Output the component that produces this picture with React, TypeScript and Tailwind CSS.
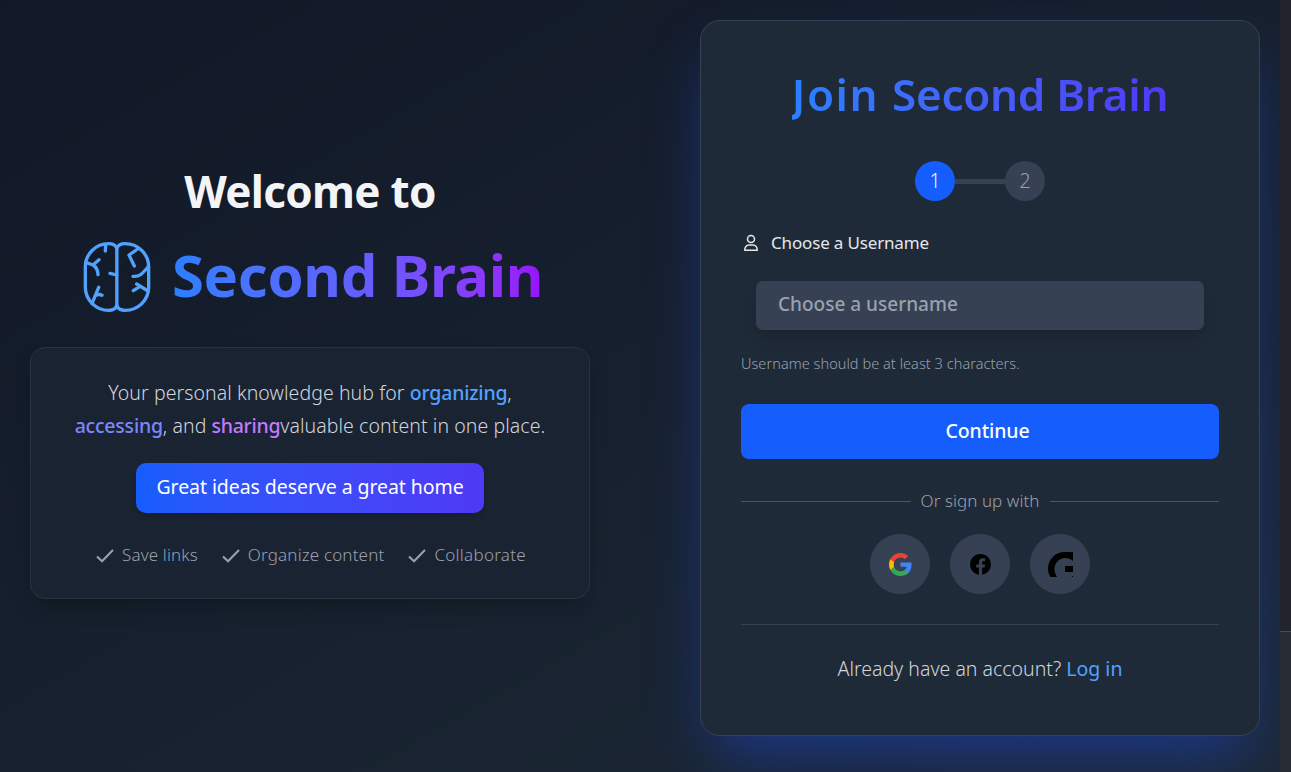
import React from "react";

function BrainIcon() {
  return (
    <svg className="h-[72px] w-[68px] shrink-0" viewBox="24 18 204 216" fill="none" stroke="#51a2ff" strokeWidth="10" strokeLinecap="round" strokeLinejoin="round">
      <path d="M125.500 40C122 30 112 26 101 26C62 26 31 58 31 95V157C31 195 63 226 101 226C112 226 122 222 125.500 212" />
      <path d="M125.500 40C129 30 139 26 150 26C190 26 221 58 221 95V157C221 195 190 226 150 226C139 226 129 222 125.500 212V40" />
      <path d="M92 28 91 48M32 82 54 90C66 98 69 107 69 119M54 90 72 74M105 115 125 120M51 206 71 157M61 181C69 178 77 178 81 181M188 42 162 60 178 93M220 95C204 113 196 126 174 124M219 168 185 147M175 167 194 155" />
    </svg>
  );
}

function UserIcon() {
  return (
    <svg className="h-[18px] w-5" viewBox="0 0 20 18" fill="none" stroke="currentColor" strokeWidth="1.5" strokeLinejoin="round">
      <circle cx="10" cy="5" r="3.500" />
      <path d="M3.700 16.300C3.700 13.300 5.500 11 8 11H12C14.500 11 16.300 13.300 16.300 16.300Z" />
    </svg>
  );
}

function GoogleIcon() {
  return (
    <svg className="size-[25px]" viewBox="0 0 24 24">
      <path fill="#4285F4" d="M22.560 12.250c0-.780-.070-1.530-.200-2.250H12v4.260h5.920c-.260 1.370-1.040 2.530-2.210 3.310v2.770h3.570c2.080-1.920 3.280-4.740 3.280-8.090z" />
      <path fill="#34A853" d="M12 23c2.970 0 5.460-.980 7.280-2.660l-3.570-2.770c-.980.660-2.230 1.060-3.710 1.060-2.860 0-5.290-1.930-6.160-4.530H2.180v2.840C3.990 20.530 7.700 23 12 23z" />
      <path fill="#FBBC05" d="M5.840 14.090c-.220-.660-.350-1.360-.350-2.090s.130-1.430.350-2.090V7.070H2.180C1.430 8.550 1 10.220 1 12s.430 3.450 1.180 4.930l3.660-2.840z" />
      <path fill="#EA4335" d="M12 5.380c1.620 0 3.060.560 4.210 1.640l3.150-3.150C17.450 2.090 14.970 1 12 1 7.700 1 3.990 3.470 2.180 7.070l3.660 2.840c.870-2.600 3.300-4.530 6.160-4.530z" />
    </svg>
  );
}

function Feature({ label, className }: { label: string; className: string }) {
  return (
    <div className="flex items-center">
      <svg className="mr-[6px] h-5 w-[22px]" viewBox="0 0 22 20" fill="none" stroke="currentColor" strokeWidth="2.1">
        <path d="M3 11.500 8 16.300 19 5" />
      </svg>
      <span className={className}>{label}</span>
    </div>
  );
}

export default function App() {
  return (
    <div className="flex h-[772px] w-[1291px] overflow-hidden bg-[#21252b] font-['Noto_Sans','Open_Sans',sans-serif] whitespace-nowrap">
      <main className="flex h-full w-[1280px] overflow-hidden bg-[linear-gradient(150deg,#111827,#1d2936)]">
        <section className="flex w-[620px] shrink-0 flex-col items-center pt-[161px]">
          <h1 className="h-[61px] text-[44px] leading-[60px] font-bold tracking-[-0.7px] text-gray-100">Welcome to</h1>
          <div className="mt-[19px] flex h-[72px] items-center pl-[6px]">
            <BrainIcon />
            <span className="-mt-[6px] ml-[21px] bg-linear-to-r from-[#2b7fff] via-[#615fff] to-[#9810fa] bg-clip-text text-[58px] leading-[75px] font-bold tracking-[-0.35px] text-transparent">Second Brain</span>
          </div>
          <div className="mt-[34px] flex h-[252px] w-[560px] flex-col items-center rounded-[15px] border border-[#283341] bg-[#1a2332] shadow-[0_12px_20px_-4px_rgba(0,0,0,.25)]">
            <p className="mt-[28px] text-center text-[19.500px] leading-[33px] font-light text-gray-300">
              <span className="block tracking-[0.070px]">Your personal knowledge hub for <span className="font-medium tracking-[-0.200px] text-[#51a2ff]">organizing</span>,</span>
              <span className="block tracking-[0.070px]"><span className="font-medium tracking-[-0.200px] text-[#7c86ff]">accessing</span>, and <span className="font-medium tracking-[-0.300px] text-[#c27aff]">sharing</span>valuable content in one place.</span>
            </p>
            <div className="mt-[21px] flex h-[50px] w-[348px] items-center justify-center rounded-[10px] bg-linear-to-r from-[#155dfc] to-[#4f39f6] pb-[2px] text-[19.500px] tracking-[-0.070px] text-white shadow-md">Great ideas deserve a great home</div>
            <div className="mt-[29px] flex gap-[22px] text-[17px] font-light text-[#99a1af]">
              <Feature label="Save links" className="tracking-[0.120px]" />
              <Feature label="Organize content" className="tracking-[0.160px]" />
              <Feature label="Collaborate" className="tracking-[0.280px]" />
            </div>
          </div>
        </section>
        <section className="ml-20 mt-5 flex h-[716px] w-[560px] shrink-0 flex-col rounded-[20px] border border-[#364153] bg-[#1f2a38] px-10 shadow-[0_31px_62px_-15px_#1c398e]">
          <h2 className="mt-[42px] h-[63px] self-center bg-linear-to-r from-[#2b7fff] to-[#4f39f6] bg-clip-text text-[44px] leading-[62px] font-semibold text-transparent"><span className="tracking-[1.500px]">Join </span><span className="tracking-[-0.300px]">Second Brain</span></h2>
          <div className="mt-[35px] flex items-center justify-center text-[19.500px] font-light">
            <span className="flex size-10 items-center justify-center rounded-full bg-[#155dfc] pb-px text-gray-100">1</span>
            <span className="h-[5px] w-[50px] bg-[#364153]" />
            <span className="flex size-10 items-center justify-center rounded-full bg-[#364153] pb-px text-[#99a1af]">2</span>
          </div>
          <label className="mt-[30px] flex h-6 items-center text-[17px] text-gray-200">
            <UserIcon /><span className="ml-[10px] tracking-[-0.160px]">Choose a Username</span>
          </label>
          <input className="mx-[15px] mt-[26px] h-[49px] rounded-[7px] bg-[#364153] px-[22px] pb-[3px] text-[19px] shadow-[0_10px_15px_-3px_rgba(0,0,0,.18)] outline-none placeholder:font-medium placeholder:text-[#99a1af]" placeholder="Choose a username" />
          <p className="mt-[21px] mb-px h-6 text-[14.500px] leading-6 font-light tracking-[0.050px] text-[#99a1af]">Username should be at least 3 characters.</p>
          <button className="mt-7 h-[55px] shrink-0 rounded-[8px] bg-[#155dfc] pb-[2px] pl-[15px] text-[19.500px] font-medium tracking-[-0.100px] text-white">Continue</button>
          <div className="mt-[30px] flex h-6 items-center text-[17px] font-light text-[#99a1af]">
            <span className="h-px flex-1 bg-[#4a5565]" /><span className="mx-[10px] tracking-[0.070px]">Or sign up with</span><span className="h-px flex-1 bg-[#4a5565]" />
          </div>
          <div className="mt-[21px] flex justify-center gap-5">
            <button className="flex size-[60px] items-center justify-center rounded-full bg-[#364153]" aria-label="Google"><GoogleIcon /></button>
            <button className="flex size-[60px] items-center justify-center rounded-full bg-[#364153]" aria-label="Facebook">
              <svg className="size-[25px]" viewBox="0 0 24 24"><path d="M12 2C6.480 2 2 6.480 2 12C2 17 5.700 21.100 10.440 21.900V14.900H7.900V12H10.440V9.800C10.440 7.290 11.930 5.910 14.210 5.910C15.310 5.910 16.450 6.100 16.450 6.100V8.560H15.190C13.950 8.560 13.560 9.330 13.560 10.120V12H16.330L15.890 14.900H13.560V21.900C18.300 21.100 22 17 22 12C22 6.480 17.520 2 12 2Z" /></svg>
            </button>
            <button className="flex size-[60px] items-center justify-center rounded-full bg-[#364153]" aria-label="Sign in">
              <svg className="size-[25px]" viewBox="0 0 25 25"><path d="M25 0H17C7 0 0 7.500 0 17C0 20 1 23 2.500 25H9C7.500 22.500 6.500 20 6.500 17C6.500 11 11 6 17 6C20 6 23 7 25 9ZM17 14H25V20H17ZM24 24H25V25H24Z" /></svg>
            </button>
          </div>
          <div className="mt-[30px] h-px bg-[#364153]" />
          <p className="mt-[29px] text-center text-[19.500px] leading-[30px] font-light text-gray-300">Already have an account? <a className="font-normal text-[#51a2ff]">Log in</a></p>
        </section>
      </main>
      <aside className="h-full w-[11px] pt-[631px]"><div className="h-full border-t border-[#484b51] bg-[#282c34]" /></aside>
    </div>
  );
}
